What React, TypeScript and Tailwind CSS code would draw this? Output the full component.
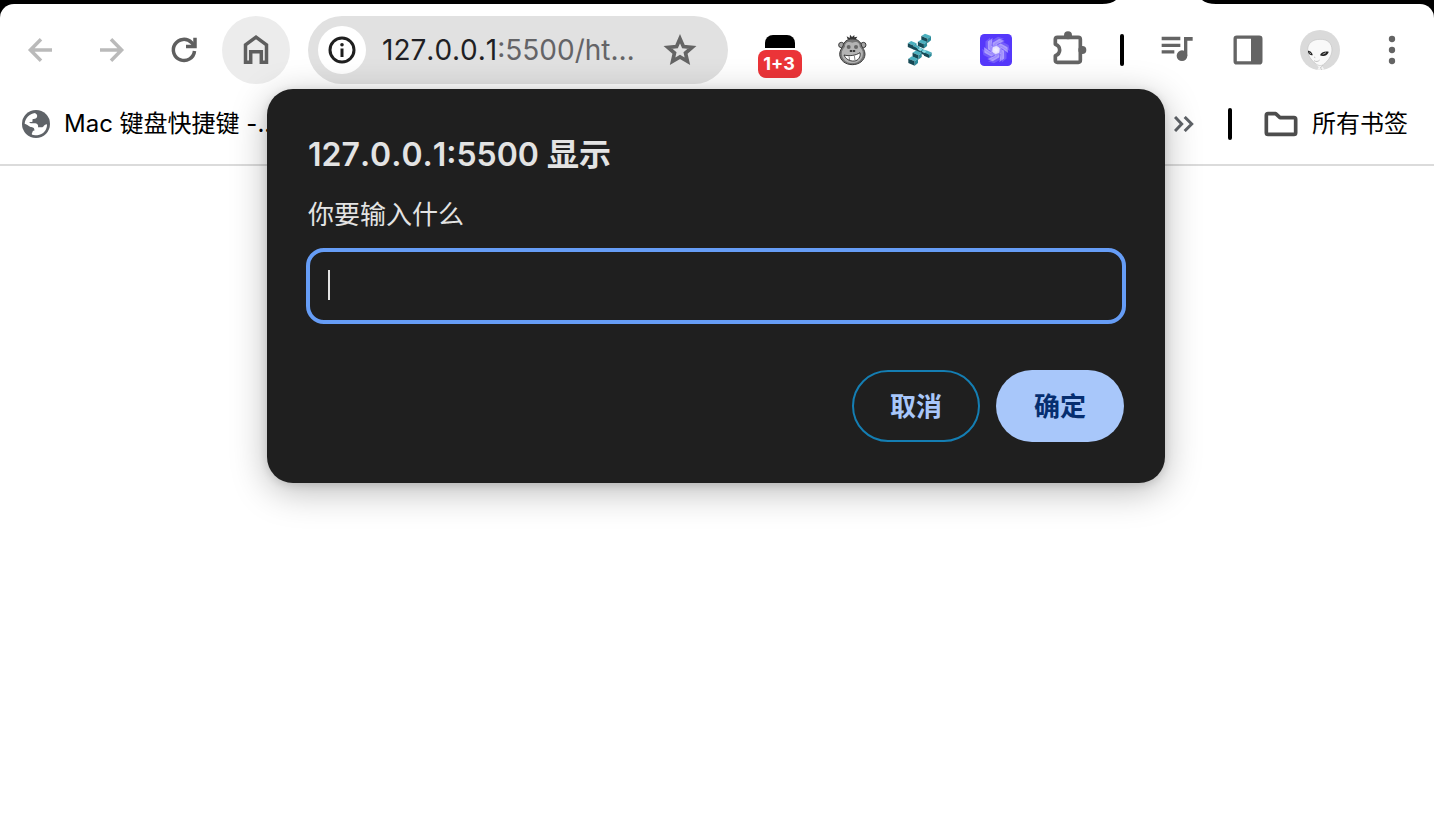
import type { ReactNode } from "react";

const FONT = "font-[Inter,'Noto_Sans_CJK_SC',sans-serif]";

function Icon({ box = "0 0 40 40", children }: { box?: string; children: ReactNode }) {
  return (
    <svg viewBox={box} className="size-10" fill="none" aria-hidden="true">
      {children}
    </svg>
  );
}

function ToolButton({ label, active, children }: { label: string; active?: boolean; children: ReactNode }) {
  return (
    <button
      type="button"
      aria-label={label}
      className={`flex size-[68px] shrink-0 items-center justify-center rounded-full ${active ? "bg-[#ececec]" : ""}`}
    >
      {children}
    </button>
  );
}

function Divider() {
  return <div className="h-8 w-1 shrink-0 rounded-full bg-black" />;
}

function TabStrip() {
  return (
    <div className="flex h-1 justify-end bg-black pr-[218px]">
      <svg viewBox="0 0 114 4" className="h-1 w-[114px]" aria-hidden="true">
        <path d="M0 4C6 4 11 2.500 14 0H100C103 2.500 108 4 114 4Z" fill="#fff" />
      </svg>
    </div>
  );
}

function MonkeyIcon() {
  return (
    <Icon box="21 30 120 120">
      <path d="M68 58 65 49 74 54 75 44 81 51 88 45 88 52 97 50 91 60Z" fill="#333" />
      <circle cx="49" cy="75" r="8" fill="#a5a5a5" stroke="#3c3c3c" strokeWidth="3" />
      <circle cx="115" cy="75" r="8" fill="#a5a5a5" stroke="#3c3c3c" strokeWidth="3" />
      <path
        d="M82 57C97 57 108 65 110 78C113 84 120 91 120 103C119 122 102 134 82 134S45 122 44 103C44 91 51 84 54 78C56 65 67 57 82 57Z"
        fill="#777"
        stroke="#3c3c3c"
        strokeWidth="3"
      />
      <path
        d="M82 68C94 62 105 68 104 80C113 88 116 98 112 110C107 123 96 129 82 129S57 123 52 110C48 98 51 88 60 80C59 68 70 62 82 68Z"
        fill="#b4b4b4"
      />
      <circle cx="71" cy="81" r="6" fill="#666" />
      <circle cx="93" cy="81" r="6" fill="#666" />
      <path d="M76 93H80M85 93H89" stroke="#111" strokeWidth="4" strokeLinecap="round" />
      <path d="M57 105C72 109 92 107 105 98C108 110 100 122 88 123C73 124 62 117 57 105Z" fill="#fff" stroke="#222" strokeWidth="2.500" />
      <path d="M72 109 74 121M88 107 90 121" stroke="#444" strokeWidth="2" />
    </Icon>
  );
}

const CUBES = [
  { x: 93, y: 54, s: 1 },
  { x: 82, y: 71, s: 0.95 },
  { x: 51, y: 75, s: 0.9 },
  { x: 63, y: 83, s: 0.65 },
  { x: 74, y: 90, s: 0.65 },
  { x: 86, y: 96, s: 0.65 },
  { x: 98, y: 102, s: 0.8 },
  { x: 66, y: 104, s: 0.95 },
  { x: 54, y: 122, s: 1 },
];

function CubesIcon() {
  return (
    <Icon box="27 30 120 120">
      {CUBES.map(({ x, y, s }) => (
        <g key={`${x}-${y}`} transform={`translate(${x} ${y}) scale(${s})`}>
          <path d="M-14-6-3-13 15-6 5 2Z" fill="#4bb0bf" />
          <path d="M-14-6 5 2V15L-14 7Z" fill="#174a56" />
          <path d="M5 2 15-6V7L5 15Z" fill="#2c8b9a" />
        </g>
      ))}
      <path d="M68 89 75 84 82 88 76 93ZM80 95 87 90 94 94 88 99Z" fill="#8bdce5" />
    </Icon>
  );
}

const BLADES = [0, 60, 120, 180, 240, 300];

function SwirlIcon() {
  return (
    <Icon box="18 30 120 120">
      <rect x="30" y="42" width="96" height="96" rx="13" fill="#5538fb" />
      {BLADES.map((angle) => (
        <g key={angle} transform={`rotate(${angle} 78 90)`} fill="#fff">
          <path d="M62 84V63L84 50 102 56 76 68Z" fillOpacity=".18" />
          <path d="M68 90V68L88 56 104 63 82 72V90Z" fillOpacity=".42" />
        </g>
      ))}
      <circle cx="78" cy="90" r="11" fill="#fff" fillOpacity=".6" />
    </Icon>
  );
}

function AvatarIcon() {
  return (
    <Icon box="30 30 120 120">
      <circle cx="90" cy="90" r="60" fill="#dadada" />
      <path d="M78 132 86 142 82 149H104L98 141 104 128Z" fill="#f4f4f4" />
      <path
        d="M90 58C113 57 126 70 126 90C125 108 115 122 101 133C93 139 84 137 77 131C62 119 53 106 53 88C54 69 68 58 90 58Z"
        fill="#f9f9f9"
        stroke="#c2c2c2"
        strokeWidth="2"
      />
      <path d="M54 92C61 92 68 99 68 106C60 106 53 100 54 92Z" fill="#222" />
      <path d="M90 106C92 97 104 93 116 95C114 105 100 112 90 106Z" fill="#222" />
      <path d="M58 98 63 102M98 103 108 98" stroke="#aaa" strokeWidth="3" />
      <path d="M72 122C79 126 84 125 89 120M100 135 91 144 96 149M72 111 76 113" stroke="#aaa" strokeWidth="2" />
    </Icon>
  );
}

function Toolbar() {
  return (
    <div className="flex items-center gap-1 pt-3 pr-2 pl-1.5">
      <ToolButton label="后退">
        <Icon>
          <path d="M32 20H10.500M21 9.300 10.400 20 21 30.700" stroke="#bababa" strokeWidth="3.500" />
        </Icon>
      </ToolButton>
      <ToolButton label="前进">
        <Icon>
          <path d="M8 20H29.500M19 9.300 29.600 20 19 30.700" stroke="#bababa" strokeWidth="3.500" />
        </Icon>
      </ToolButton>
      <ToolButton label="重新加载">
        <Icon>
          <path d="M30.500 21A10.600 10.600 0 1 1 27.500 12.500L30 15.500" stroke="#5f5f5f" strokeWidth="3.500" />
          <path d="M31 7.700V16.500H22" stroke="#5f5f5f" strokeWidth="3.500" />
        </Icon>
      </ToolButton>
      <ToolButton label="主页" active>
        <Icon>
          <path d="M9.500 32.200V14.800L20 7.200 30.500 14.800V32.200H25.300V21.700H14.700V32.200Z" stroke="#5f5f5f" strokeWidth="3.500" />
        </Icon>
      </ToolButton>

      <div className="mx-3.5 flex h-[68px] min-w-0 flex-1 items-center rounded-full bg-[#e1e1e1] pr-7 pl-2.5">
        <button type="button" aria-label="查看网站信息" className="flex size-12 shrink-0 items-center justify-center rounded-full bg-white">
          <Icon>
            <circle cx="20" cy="20" r="12" stroke="#1f1f1f" strokeWidth="3" />
            <path d="M20 18.500V27" stroke="#1f1f1f" strokeWidth="3" />
            <circle cx="20" cy="14.700" r="1.800" fill="#1f1f1f" />
          </Icon>
        </button>
        <div className="ml-4 min-w-0 flex-1 text-[28px] leading-9 whitespace-nowrap text-[#1f1f24] [font-kerning:none]">
          127.0.0.1<span className="text-[#646467]">:5500/ht…</span>
        </div>
        <button type="button" aria-label="为此标签页添加书签" className="shrink-0">
          <Icon box="0 0 24 24">
            <path
              d="M12 5.200 14.040 9.950 19.200 10.400 15.300 13.800 16.450 18.800 12 16.150 7.550 18.800 8.700 13.800 4.800 10.400 9.960 9.950Z"
              stroke="#646464"
              strokeWidth="2.200"
            />
          </Icon>
        </button>
      </div>

      <ToolButton label="扩展程序 1+3">
        <span className="flex flex-col items-center gap-0.5 pt-3">
          <span className="h-[13px] w-[30px] rounded-t-lg bg-black" />
          <span className="flex h-7 w-11 items-center justify-center rounded-lg bg-[#eb3438] pr-0.5 text-lg font-bold text-white">1+3</span>
        </span>
      </ToolButton>
      <ToolButton label="猴子扩展程序">
        <MonkeyIcon />
      </ToolButton>
      <ToolButton label="方块扩展程序">
        <CubesIcon />
      </ToolButton>
      <ToolButton label="旋涡扩展程序">
        <SwirlIcon />
      </ToolButton>
      <ToolButton label="扩展程序">
        <Icon box="924 90 120 120">
          <path
            d="M946 133V118Q946 112 952 112H1015Q1021 112 1021 118V181Q1021 187 1015 187H952Q946 187 946 181V167C954 164 959 158 959 150S954 136 946 133Z"
            stroke="#646464"
            strokeWidth="11"
            strokeLinejoin="round"
          />
          <circle cx="984" cy="106" r="12" fill="#646464" />
          <circle cx="1027" cy="150" r="12" fill="#646464" />
        </Icon>
      </ToolButton>
      <div className="mx-3.5">
        <Divider />
      </div>
      <ToolButton label="媒体控件">
        <Icon box="228 90 120 120">
          <path d="M245 115.500H301M245 136H301M245 155.500H283" stroke="#646464" strokeWidth="10" />
          <path d="M312 111H338V122H322V167H312Z" fill="#646464" />
          <circle cx="306" cy="167" r="16" fill="#646464" />
        </Icon>
      </ToolButton>
      <ToolButton label="侧边栏">
        <Icon box="444 90 120 120">
          <rect x="465.500" y="111.500" width="77" height="77" rx="5" stroke="#646464" strokeWidth="10" />
          <path d="M513 110H544V190H513Z" fill="#646464" />
        </Icon>
      </ToolButton>
      <ToolButton label="个人资料">
        <AvatarIcon />
      </ToolButton>
      <ToolButton label="更多">
        <Icon box="876 90 120 120">
          <circle cx="936" cy="117" r="9.500" fill="#646464" />
          <circle cx="936" cy="150" r="9.500" fill="#646464" />
          <circle cx="936" cy="183" r="9.500" fill="#646464" />
        </Icon>
      </ToolButton>
    </div>
  );
}

function BookmarksBar() {
  return (
    <div className="flex h-[82px] items-center border-b-2 border-[#dbdbdb] pr-[26px] pl-[22px] text-2xl text-black">
      <a href="#mac" className="flex items-center gap-3.5 whitespace-nowrap">
        <svg viewBox="66 330 84 84" className="size-7" aria-hidden="true">
          <circle cx="108" cy="372" r="42" fill="#5f6368" />
          <path
            d="M74 371C76 354 88 341 105 339L111 344C113 354 108 356 98 357L97 366H87L92 370H106C113 371 116 377 114 382H125C132 382 131 374 141 373C142 389 130 404 112 406C103 406 96 405 95 402L99 392H103C104 385 101 382 94 381C87 380 85 374 74 371Z"
            fill="#fff"
          />
        </svg>
        <span>Mac 键盘快捷键 -...</span>
      </a>
      <div className="ml-auto flex items-center">
        <button type="button" aria-label="更多书签">
          <svg viewBox="282 348 60 48" className="h-4 w-5" fill="none" aria-hidden="true">
            <path d="M285 351 305 372 285 393M314 351 335 372 314 393" stroke="#5f6368" strokeWidth="9" />
          </svg>
        </button>
        <div className="mr-8 ml-[34px]">
          <Divider />
        </div>
        <a href="#all" className="flex items-center gap-3.5 whitespace-nowrap">
          <svg viewBox="549 330 102 84" className="h-7 w-[34px]" fill="none" aria-hidden="true">
            <path
              d="M556 346Q556 341 561 341H584L597 353H639Q644 353 644 358V398Q644 403 639 403H561Q556 403 556 398Z"
              stroke="#4d4d4d"
              strokeWidth="11"
              strokeLinejoin="round"
            />
          </svg>
          <span>所有书签</span>
        </a>
      </div>
    </div>
  );
}

function PromptDialog() {
  return (
    <form
      role="dialog"
      aria-labelledby="prompt-title"
      className="absolute top-[89px] left-[267px] w-[898px] rounded-[26px] bg-[#1f1f1f] px-[39px] pt-11 pb-[41px] text-[#e3e3e3] shadow-[0_8px_36px_rgba(0,0,0,0.28),0_2px_8px_rgba(0,0,0,0.12)]"
    >
      <h1 id="prompt-title" className="px-0.5 text-[32px] leading-[44px] font-semibold [font-kerning:none]">
        127.0.0.1:5500 显示
      </h1>
      <label htmlFor="prompt-value" className="mt-5 block px-0.5 text-[26px] leading-9">
        你要输入什么
      </label>
      <div className="relative mt-[15px]">
        <input
          id="prompt-value"
          type="text"
          className="block h-[76px] w-full rounded-[18px] border-4 border-[#669df6] bg-transparent px-[18px] text-[26px] caret-transparent outline-none"
        />
        <span className="absolute top-[22px] left-[22px] h-[30px] w-0.5 bg-[#e3e3e3]" />
      </div>
      <div className="mt-[46px] flex justify-end gap-4 px-0.5 text-[26px] font-semibold">
        <button type="button" className="h-[72px] w-32 rounded-full border-2 border-[#147eb3] text-[#a8c7fa]">
          取消
        </button>
        <button type="submit" className="h-[72px] w-32 rounded-full bg-[#a8c7fa] text-[#062e6f]">
          确定
        </button>
      </div>
    </form>
  );
}

export default function App() {
  return (
    <div lang="zh-CN" className={`relative min-h-screen overflow-hidden bg-white ${FONT}`}>
      <TabStrip />
      <div className="bg-black">
        <header className="rounded-t-[14px] bg-white">
          <Toolbar />
          <BookmarksBar />
        </header>
      </div>
      <PromptDialog />
    </div>
  );
}
